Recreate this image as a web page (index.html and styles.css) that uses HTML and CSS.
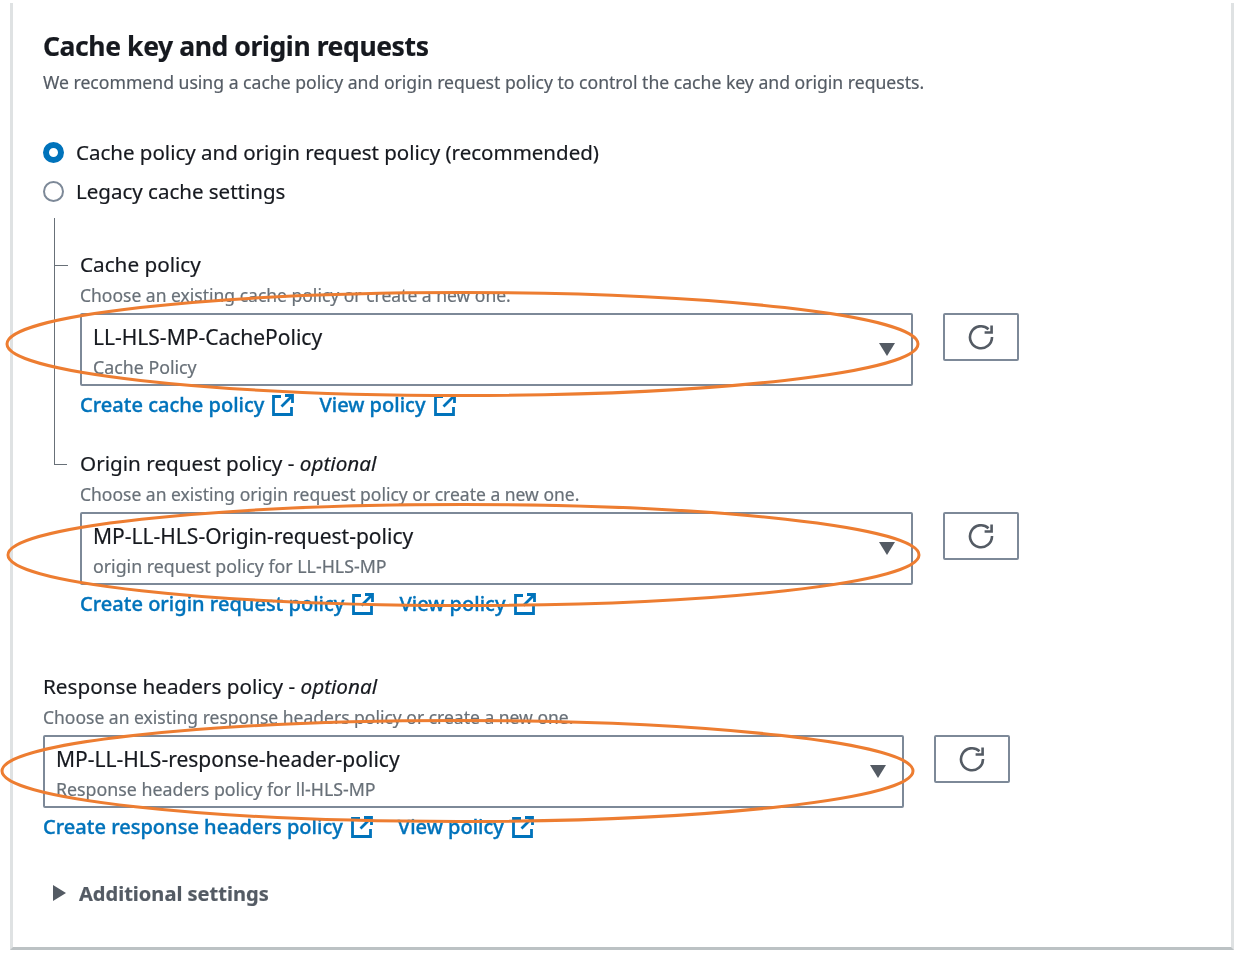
FILE: index.html
```html
<!DOCTYPE html>
<html lang="en">
<head>
<meta charset="utf-8">
<title>Cache key and origin requests</title>
<link rel="stylesheet" href="styles.css">
</head>
<body>
<svg width="0" height="0" class="defs">
  <defs>
    <symbol id="ext" viewBox="0 0 22 22">
      <path d="M9 2.5H1.5v18h18V13" fill="none" stroke="currentColor" stroke-width="2.8"/>
      <path d="M13 1.500h7.500V9M20 2 9.500 12.500" fill="none" stroke="currentColor" stroke-width="2.8"/>
    </symbol>
    <symbol id="refresh" viewBox="0 0 26 26">
      <path d="M20.5 5.200A11 11 0 1 0 24 13" fill="none" stroke="currentColor" stroke-width="2.600"/>
      <path d="M23.600 1.500v7h-7" fill="none" stroke="currentColor" stroke-width="2.600"/>
    </symbol>
  </defs>
</svg>
<main class="card">
  <h2 class="title">Cache key and origin requests</h2>
  <p class="desc">We recommend using a cache policy and origin request policy to control the cache key and origin requests.</p>

  <div class="radios">
    <div class="radio-row"><span class="radio radio-on"></span><span class="radio-label">Cache policy and origin request policy (recommended)</span></div>
    <div class="radio-row"><span class="radio"></span><span class="radio-label">Legacy cache settings</span></div>
  </div>

  <div class="tree">
    <section class="field field-first">
      <div class="label">Cache policy</div>
      <div class="hint">Choose an existing cache policy or create a new one.</div>
      <div class="control">
        <div class="select select-tree">
          <div class="select-text"><div class="value">LL-HLS-MP-CachePolicy</div><div class="sub">Cache Policy</div></div>
          <span class="caret"></span>
        </div>
        <button class="refresh" type="button" aria-label="Refresh"><svg class="refresh-icon"><use href="#refresh"/></svg></button>
      </div>
      <div class="links">
        <a class="link">Create cache policy<svg class="ext"><use href="#ext"/></svg></a>
        <a class="link">View policy<svg class="ext"><use href="#ext"/></svg></a>
      </div>
    </section>
    <section class="field field-second">
      <div class="label">Origin request policy - <em>optional</em></div>
      <div class="hint">Choose an existing origin request policy or create a new one.</div>
      <div class="control">
        <div class="select select-tree">
          <div class="select-text"><div class="value">MP-LL-HLS-Origin-request-policy</div><div class="sub">origin request policy for LL-HLS-MP</div></div>
          <span class="caret"></span>
        </div>
        <button class="refresh" type="button" aria-label="Refresh"><svg class="refresh-icon"><use href="#refresh"/></svg></button>
      </div>
      <div class="links">
        <a class="link">Create origin request policy<svg class="ext"><use href="#ext"/></svg></a>
        <a class="link">View policy<svg class="ext"><use href="#ext"/></svg></a>
      </div>
    </section>
  </div>

  <section class="field field-third">
    <div class="label">Response headers policy - <em>optional</em></div>
    <div class="hint">Choose an existing response headers policy or create a new one.</div>
    <div class="control">
      <div class="select select-wide">
        <div class="select-text"><div class="value">MP-LL-HLS-response-header-policy</div><div class="sub">Response headers policy for ll-HLS-MP</div></div>
        <span class="caret"></span>
      </div>
      <button class="refresh" type="button" aria-label="Refresh"><svg class="refresh-icon"><use href="#refresh"/></svg></button>
    </div>
    <div class="links">
      <a class="link">Create response headers policy<svg class="ext"><use href="#ext"/></svg></a>
      <a class="link">View policy<svg class="ext"><use href="#ext"/></svg></a>
    </div>
  </section>

  <div class="additional"><span class="tri"></span><span>Additional settings</span></div>
</main>
<svg class="marks" width="1240" height="953" viewBox="0 0 1240 953" aria-hidden="true">
  <ellipse class="mark" cx="462.500" cy="344" rx="455.500" ry="51.500"/>
  <ellipse class="mark" cx="463.500" cy="555" rx="455.500" ry="50.500"/>
  <ellipse class="mark" cx="457.500" cy="771" rx="455.500" ry="50.500"/>
</svg>
</body>
</html>
```
FILE: styles.css
```css
* { box-sizing: border-box; }
html, body { margin: 0; background: #fff; }
body {
  width: 1240px;
  height: 953px;
  overflow: hidden;
  position: relative;
  font-family: "Noto Sans", "Open Sans", sans-serif;
  color: #16191f;
}
.defs { position: absolute; }
.card {
  margin: 3px 0 0 10px;
  width: 1224px;
  height: 947px;
  padding: 28px 0 0 30px;
  border-left: 3px solid #dfe2e3;
  border-right: 3px solid #dfe2e3;
  border-bottom: 3px solid #bcc2c4;
  filter: blur(0.45px);
  -webkit-text-stroke: 0.2px;
}
.title {
  margin: 0;
  font-size: 26.500px;
  line-height: 30px;
  font-weight: 700;
  letter-spacing: -0.4px;
}
.desc {
  margin: 9px 0 0;
  font-size: 17.600px;
  line-height: 24px;
  color: #545b64;
}
.radios { margin-top: 44px; display: flex; flex-direction: column; gap: 11px; }
.radio-row { display: flex; align-items: center; gap: 12px; height: 28px; font-size: 20.500px; }
.radio {
  width: 21px;
  height: 21px;
  border-radius: 50%;
  border: 2px solid #7d8998;
  flex: none;
}
.radio-on { border: 6px solid #0073bb; background: #fff; }
.radio-label { line-height: 28px; }

.tree { margin: 13px 0 0 11px; }
.field { position: relative; }
.field-first { height: 247px; padding: 32px 0 0 25px; border-left: 1.5px solid #687078; }
.field-first::before {
  content: "";
  position: absolute;
  left: 0;
  top: 47px;
  width: 13px;
  border-top: 1.5px solid #687078;
}
.field-second { padding: 0 0 0 26px; margin-top: -16px; }
.field-second::before {
  content: "";
  position: absolute;
  left: 0;
  top: 15px;
  width: 13px;
  border-top: 1.5px solid #687078;
}
.field-third { margin-top: 54px; }

.label { font-size: 20.700px; line-height: 28px; }
.label em { font-style: italic; }
.hint { margin-top: 6px; font-size: 17.500px; line-height: 22px; color: #687078; }
.control { display: flex; align-items: flex-start; gap: 30px; margin-top: 7px; }
.select {
  height: 73px;
  border: 2px solid #7d8998;
  border-radius: 2px;
  display: flex;
  align-items: center;
  justify-content: space-between;
  padding: 0 16px 0 11px;
}
.select-tree { width: 833px; }
.select-wide { width: 861px; }
.select-text { display: flex; flex-direction: column; padding-top: 3px; }
.value { font-size: 21px; line-height: 30px; }
.sub { font-size: 17.800px; line-height: 26px; margin-top: 2px; color: #687078; }
.caret {
  width: 0;
  height: 0;
  border-left: 8px solid transparent;
  border-right: 8px solid transparent;
  border-top: 13px solid #545b64;
}
.refresh {
  width: 76px;
  height: 48px;
  background: #fff;
  border: 2px solid #7d8998;
  border-radius: 2px;
  padding: 0;
  display: flex;
  align-items: center;
  justify-content: center;
  color: #545b64;
}
.refresh-icon { width: 26px; height: 26px; }
.links { display: flex; gap: 25px; margin-top: 5px; height: 28px; align-items: center; }
.link { display: flex; align-items: center; gap: 8px; font-size: 20.050px; line-height: 28px; color: #0073bb; font-weight: 500; -webkit-text-stroke: 0.35px; }
.ext { width: 22px; height: 22px; }
.additional {
  display: flex;
  align-items: center;
  gap: 13px;
  margin: 37px 0 0 10px;
  height: 30px;
  font-size: 20.050px;
  font-weight: 700;
  color: #545b64;
}
.tri {
  width: 0;
  height: 0;
  border-top: 8px solid transparent;
  border-bottom: 8px solid transparent;
  border-left: 13px solid #545b64;
}
.marks { position: absolute; left: 0; top: 0; pointer-events: none; }
.mark { fill: none; stroke: #ed7d31; stroke-width: 3; }
```
